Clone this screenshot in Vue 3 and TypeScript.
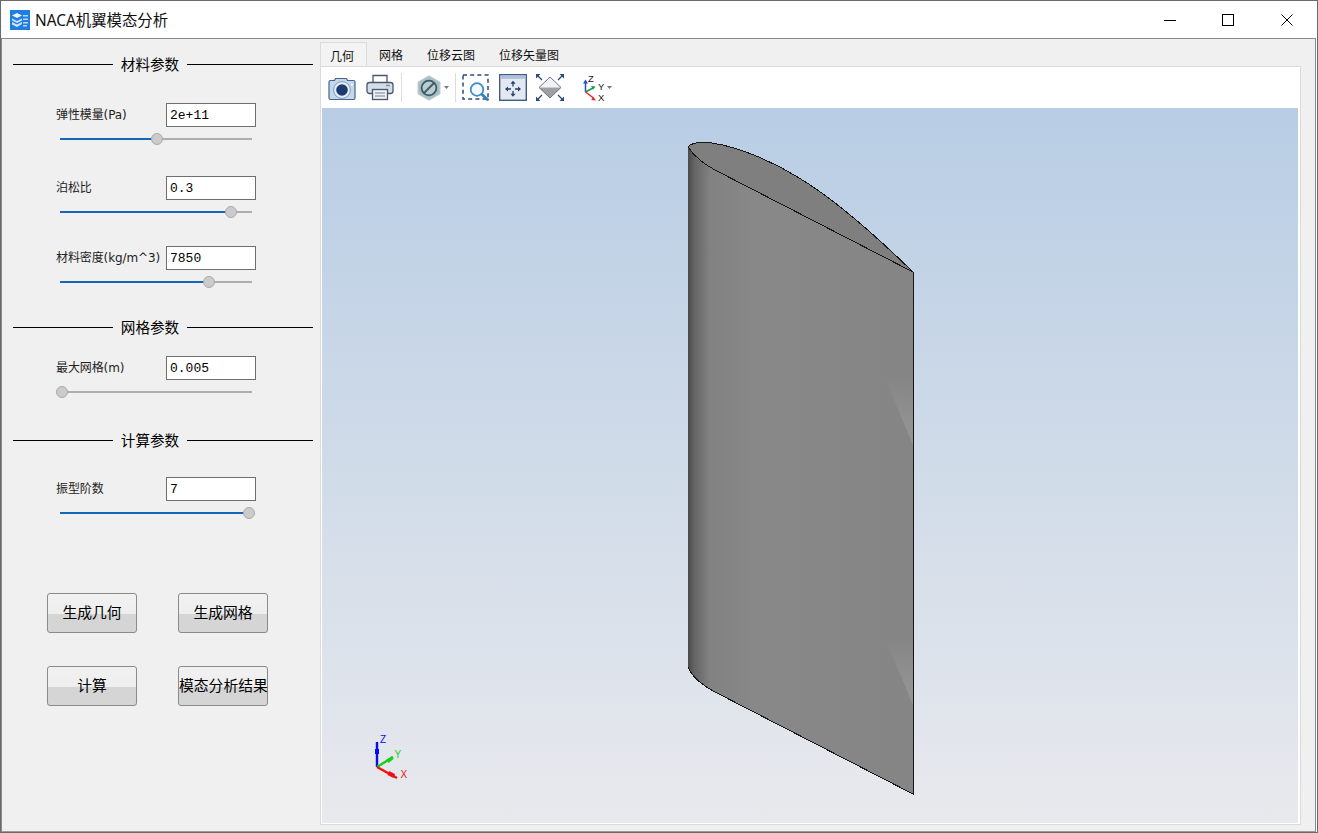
<template>
  <div class="window">
    <header class="titlebar">
      <svg class="app-icon" viewBox="0 0 20 20" aria-hidden="true">
        <rect width="20" height="20" fill="#1f7fe0" />
        <path d="M2 5.500 7 3l5 2.500L7 8z" fill="#eaf4ff" />
        <path d="M2 8.500 7 11l5-2.500v2L7 13l-5-2.500zM2 12l5 2.500 5-2.500v2L7 17l-5-2.500z" fill="#cfe4fb" />
        <path d="M13 5h5v1.600h-5zM13 8.500h5v1.600h-5zM13 12h5v1.600h-5zM13 15h4v1.400h-4z" fill="#b9d8f8" />
      </svg>
      <span class="app-title">NACA机翼模态分析</span>
      <div class="win-controls">
        <button class="win-btn" aria-label="minimize">
          <svg width="12" height="12" viewBox="0 0 12 12"><path d="M0 6.500h12" stroke="#000" /></svg>
        </button>
        <button class="win-btn" aria-label="maximize">
          <svg width="12" height="12" viewBox="0 0 12 12"><rect x=".5" y=".5" width="11" height="11" fill="none" stroke="#000" /></svg>
        </button>
        <button class="win-btn" aria-label="close">
          <svg width="12" height="12" viewBox="0 0 12 12"><path d="M.5.5l11 11M11.500.5l-11 11" stroke="#000" /></svg>
        </button>
      </div>
    </header>

    <div class="main">
      <aside class="panel">
        <section v-for="s in sections" :key="s.title" class="group" :class="s.cls">
          <div class="group-title">
            <i class="rule rule--left"></i>
            <span>{{ s.title }}</span>
            <i class="rule"></i>
          </div>
          <div v-for="f in s.fields" :key="f.label" class="field">
            <div class="field-row">
              <label class="field-label">{{ f.label }}</label>
              <div class="field-input">{{ f.value }}</div>
            </div>
            <div class="slider">
              <div class="slider-fill" :style="{ width: f.pos + 'px' }"></div>
              <div class="slider-knob" :style="{ left: f.pos - 6 + 'px' }"></div>
            </div>
          </div>
        </section>

        <div class="actions">
          <button v-for="a in actions" :key="a" class="action-btn">{{ a }}</button>
        </div>
      </aside>

      <div class="workspace">
        <nav class="tabs">
          <div
            v-for="(t, i) in tabs"
            :key="t"
            class="tab"
            :class="{ 'tab--active': i === 0 }"
          >{{ t }}</div>
        </nav>

        <div class="pane">
          <div class="toolbar">
            <!-- 카메라 -->
            <svg class="tool tool--camera" width="28" height="26" viewBox="0 0 28 26">
              <path d="M2.500 5.500h4l1-2h11l1 2h6a1.500 1.500 0 0 1 1.500 1.500v16a1.500 1.500 0 0 1-1.500 1.500h-23A1.500 1.500 0 0 1 1 23V7a1.500 1.500 0 0 1 1.500-1.500z" fill="#c5d7ea" stroke="#47648c" stroke-width="1.200" />
              <circle cx="14" cy="15" r="8.400" fill="#e6eef7" stroke="#7f9bbd" />
              <circle cx="14" cy="15" r="5.800" fill="#1d3b70" />
              <circle cx="24" cy="9.500" r="1" fill="#fff" />
            </svg>
            <!-- 프린터 -->
            <svg class="tool tool--printer" width="28" height="27" viewBox="0 0 28 27">
              <path d="M7 9V1.500h14V9" fill="#fff" stroke="#47586e" stroke-width="1.300" />
              <rect x="1" y="8.500" width="26" height="11" rx="2.500" fill="#d4dde8" stroke="#47586e" stroke-width="1.300" />
              <path d="M20 11.500h4" stroke="#7f8ea3" stroke-width="1.400" />
              <rect x="6.500" y="15.500" width="15" height="10" fill="#eef1f5" stroke="#47586e" stroke-width="1.300" />
              <path d="M9 19h10M9 22h10" stroke="#9aa6b6" stroke-width="1.400" />
            </svg>
            <i class="tool-sep tool-sep--a"></i>
            <!-- 표시 끄기 -->
            <svg class="tool tool--hex" width="24" height="26" viewBox="0 0 24 26">
              <path d="M12 .8 23 7v12l-11 6.200L1 19V7z" fill="#a9bfc3" stroke="#c0d0d3" />
              <circle cx="12" cy="13" r="7.400" fill="#b9cccf" stroke="#3d5c66" stroke-width="1.800" />
              <path d="M7 18 17 8" stroke="#3d5c66" stroke-width="1.800" />
            </svg>
            <svg class="tool-caret tool-caret--hex" width="5" height="3" viewBox="0 0 5 3"><path d="M0 0h5L2.500 3z" fill="#777" /></svg>
            <i class="tool-sep tool-sep--b"></i>
            <!-- 영역 확대 -->
            <svg class="tool tool--zoom" width="28" height="27" viewBox="0 0 28 27">
              <rect x="1" y="1" width="25" height="24" fill="none" stroke="#2c4a78" stroke-width="1.500" stroke-dasharray="4 3.200" />
              <circle cx="15" cy="15.500" r="6.300" fill="#f2f8fc" stroke="#3e8ec4" stroke-width="1.800" />
              <path d="M19.500 20l7 6.500" stroke="#2f7fb8" stroke-width="2.600" />
            </svg>
            <!-- 화면 맞춤 -->
            <svg class="tool tool--fit" width="28" height="27" viewBox="0 0 28 27">
              <rect x=".7" y=".7" width="26.600" height="25.600" fill="#e4e9f1" stroke="#3f5c88" stroke-width="1.400" />
              <rect x="1.400" y="1.400" width="25.200" height="3.400" fill="#aebfd6" />
              <path d="M14 9v3.500M14 17v3.500M9 15h3M16 15h3" stroke="#22406e" stroke-width="1.300" />
              <path d="M14 6.800l2.600 3h-5.200zM14 22.800l2.600-3h-5.200zM6 15l3-2.600v5.200zM22 15l-3-2.600v5.200z" fill="#22406e" />
            </svg>
            <!-- 전체 보기 -->
            <svg class="tool tool--diamond" width="28" height="27" viewBox="0 0 28 27">
              <path d="M14 3 25 13.500H3z" fill="#f1f2f4" />
              <path d="M3 13.500h22L14 24z" fill="#9c9fa4" />
              <path d="M14 3 25 13.500 14 24 3 13.500z" fill="none" stroke="#6f7480" />
              <path d="M2 2l4 4M26 2l-4 4M2 25l4-4M26 25l-4-4" stroke="#2c4a78" stroke-width="1.300" />
              <path d="M0 0h4.500L0 4.500zM28 0h-4.500L28 4.500zM0 27h4.500L0 22.500zM28 27h-4.500L28 22.500z" fill="#2c4a78" />
            </svg>
            <!-- 좌표축 -->
            <svg class="tool tool--axes" width="23" height="28" viewBox="0 0 23 28">
              <path d="M2.500 18V8" stroke="#1f4fc0" stroke-width="1.500" />
              <path d="M2.500 5.500l2.500 4H0z" fill="#1f4fc0" />
              <path d="M2.500 18 10 14" stroke="#1c9a4a" stroke-width="1.500" />
              <path d="M12.500 12.500l-4.500-.5 2 3.800z" fill="#1c9a4a" />
              <path d="M2.500 18l8 6" stroke="#e0272b" stroke-width="1.500" />
              <path d="M13 26.500l-4.800-.5 2-3.300z" fill="#e0272b" />
              <text x="5" y="8" class="axis-mini">Z</text>
              <text x="15" y="16" class="axis-mini">Y</text>
              <text x="15" y="27" class="axis-mini">X</text>
            </svg>
            <svg class="tool-caret tool-caret--axes" width="5" height="3" viewBox="0 0 5 3"><path d="M0 0h5L2.500 3z" fill="#777" /></svg>
          </div>

          <div class="view">
            <svg class="scene" viewBox="322 108 976 715" aria-hidden="true">
              <defs>
                <linearGradient id="body-shade" gradientUnits="userSpaceOnUse" x1="688" y1="0" x2="913" y2="0">
                  <stop offset="0" stop-color="#4a4a4a" />
                  <stop offset="0.03" stop-color="#666" />
                  <stop offset="0.1" stop-color="#828282" />
                  <stop offset="0.3" stop-color="#888" />
                  <stop offset="1" stop-color="#858585" />
                </linearGradient>
                <linearGradient id="facet" x1="0" y1="0" x2="0" y2="1">
                  <stop offset="0" stop-color="#939393" stop-opacity="0" />
                  <stop offset="0.6" stop-color="#939393" stop-opacity="0.8" />
                  <stop offset="1" stop-color="#959595" />
                </linearGradient>
              </defs>
              <path d="M688 147C692 142 704 142 712 143C740 147 775 163 797 176.700C835 199 875 235 913 272L715 170C702 163 694 156 688 147Z" fill="#7f7f7f" />
              <path d="M688 147C694 156 702 163 715 170L913 272V794L715 692C702 685 692 677 688 667Z" fill="url(#body-shade)" />
              <path d="M885 378H913V445Z" fill="url(#facet)" />
              <path d="M885 638H913V705Z" fill="url(#facet)" />
              <g fill="none" stroke="#161616" stroke-width="1" shape-rendering="crispEdges">
                <path d="M688 147C692 142 704 142 712 143C740 147 775 163 797 176.700C835 199 875 235 913 272" />
                <path d="M688 147C694 156 702 163 715 170L913 272V794L715 692C702 685 692 677 688 667" />
              </g>

              <!-- 뷰 좌표축 -->
              <path d="M377 767V742" stroke="#0a0af0" stroke-width="2.400" />
              <path d="M375 749h4v5h-4z" fill="#0a0af0" />
              <path d="M377 767 393 757" stroke="#17d017" stroke-width="2.400" />
              <path d="M386 760l6-4 1.500 3-5 4z" fill="#17d017" />
              <path d="M377 767 397 778" stroke="#f01010" stroke-width="2.400" />
              <path d="M389 771l6 3-1.500 4-6-3z" fill="#f01010" />
              <text x="380" y="743" class="axis-label axis-label--z">Z</text>
              <text x="394.500" y="758" class="axis-label axis-label--y">Y</text>
              <text x="400.500" y="778" class="axis-label axis-label--x">X</text>
            </svg>
          </div>
        </div>
      </div>
    </div>
  </div>
</template>

<script setup lang="ts">
interface Field {
  label: string;
  value: string;
  pos: number; // 슬라이더 핸들 위치(px)
}

const sections: { title: string; cls: string; fields: Field[] }[] = [
  {
    title: '材料参数',
    cls: 'group--material',
    fields: [
      { label: '弹性模量(Pa)', value: '2e+11', pos: 97 },
      { label: '泊松比', value: '0.3', pos: 171 },
      { label: '材料密度(kg/m^3)', value: '7850', pos: 149 },
    ],
  },
  {
    title: '网格参数',
    cls: 'group--mesh',
    fields: [{ label: '最大网格(m)', value: '0.005', pos: 2 }],
  },
  {
    title: '计算参数',
    cls: 'group--solve',
    fields: [{ label: '振型阶数', value: '7', pos: 189 }],
  },
];

const actions = ['生成几何', '生成网格', '计算', '模态分析结果'];
const tabs = ['几何', '网格', '位移云图', '位移矢量图'];
</script>

<style>
html,
body {
  margin: 0;
  overflow: hidden;
  background: #fff;
}
</style>

<style scoped>
.window {
  width: 1318px;
  height: 833px;
  box-sizing: border-box;
  display: flex;
  flex-direction: column;
  border: 1px solid #6a6a6a;
  background: #fff;
  font-family: "Noto Sans CJK SC", "Noto Sans", sans-serif;
  color: #000;
}

/* 타이틀바 */
.titlebar {
  height: 37px;
  flex: none;
  display: flex;
  align-items: center;
  padding-left: 9px;
}

.app-icon {
  width: 20px;
  height: 20px;
}

.app-title {
  margin-left: 5px;
  font-family: "Noto Sans", "Noto Sans CJK SC", sans-serif;
  font-size: 15.400px;
  color: #111;
}

.win-controls {
  margin-left: auto;
  margin-right: 1px;
  display: flex;
}

.win-btn {
  width: 58.500px;
  height: 37px;
  padding: 0;
  border: 0;
  background: transparent;
  display: flex;
  align-items: center;
  justify-content: center;
}

.main {
  flex: 1;
  min-height: 0;
  display: flex;
  margin-right: 1px;
  border: 1px solid #8a8a8a;
  border-bottom-color: #9a9a9a;
  background: #f0f0f0;
}

/* 왼쪽 패널 */
.panel {
  width: 318px;
  flex: none;
  box-sizing: border-box;
  padding: 15px 7px 0 11px;
}

.group--mesh {
  margin-top: 34px;
}

.group--solve {
  margin-top: 37px;
}

.group-title {
  height: 20px;
  display: flex;
  align-items: center;
  font-size: 14.600px;
  line-height: 20px;
}

.group-title span {
  width: 74px;
  text-align: center;
}

.rule {
  flex: 1;
  height: 1px;
  background: #000;
}

.rule--left {
  flex: none;
  width: 100px;
}

.field {
  padding-left: 43px;
  margin-top: 36px;
}

.group--material .field:nth-child(2) {
  margin-top: 29px;
}

.group--material .field:nth-child(4) {
  margin-top: 33px;
}

.group--mesh .field {
  margin-top: 19px;
}

.group--solve .field {
  margin-top: 27px;
}

.field-row {
  display: flex;
  align-items: center;
  height: 24px;
}

.field-label {
  width: 110px;
  flex: none;
  margin-top: -3px;
  font-family: "DejaVu Sans", "Noto Sans CJK SC", sans-serif;
  font-size: 12px;
  letter-spacing: -0.1px;
  color: #222;
  white-space: nowrap;
}

.field-input {
  width: 90px;
  height: 24px;
  box-sizing: border-box;
  border: 1px solid #6f6f6f;
  background: #fff;
  padding: 0 3px;
  font-family: "Liberation Mono", "DejaVu Sans Mono", monospace;
  font-size: 13px;
  line-height: 24px;
}

.slider {
  position: relative;
  width: 192px;
  height: 2px;
  margin: 11px 0 0 4px;
  background: #aeaeae;
}

.slider-fill {
  height: 100%;
  background: #1565b8;
}

.slider-knob {
  position: absolute;
  top: -5px;
  width: 12px;
  height: 12px;
  box-sizing: border-box;
  border-radius: 50%;
  background: #cbcbcb;
  border: 1px solid #aaa;
}

.actions {
  display: grid;
  grid-template-columns: 90px 90px;
  column-gap: 41px;
  row-gap: 33px;
  margin: 79px 0 0 34px;
}

.action-btn {
  height: 40px;
  padding: 0 0 3px;
  border: 1px solid #8a8a8a;
  border-radius: 3px;
  background: linear-gradient(#f1f1f1 0, #eeeeee 52%, #d5d5d5 52%, #d5d5d5 100%);
  font-family: inherit;
  font-size: 14.800px;
  color: #000;
  white-space: nowrap;
}

/* 오른쪽 작업 영역 */
.workspace {
  flex: 1;
  min-width: 0;
  padding-top: 3px;
  display: flex;
  flex-direction: column;
}

.tabs {
  height: 24px;
  flex: none;
  display: flex;
  font-size: 12px;
}

.tab {
  padding: 0 12px;
  line-height: 25px;
  color: #111;
}

.tab--active {
  padding: 0 12px 0 9px;
  border: 1px solid #dcdcdc;
  border-bottom: 0;
  background: #f3f3f3;
}

.pane {
  width: 981px;
  height: 759px;
  box-sizing: border-box;
  border: 1px solid #dadada;
  padding: 0 2px 1px 1px;
  background: #fff;
  display: flex;
  flex-direction: column;
}

.toolbar {
  height: 41px;
  flex: none;
  display: flex;
  align-items: center;
  padding-left: 6px;
}

.tool {
  flex: none;
}

.tool--printer {
  margin-left: 10px;
}

.tool-sep {
  width: 1px;
  height: 29px;
  flex: none;
  background: #dcdcdc;
}

.tool-sep--a {
  margin-left: 7px;
}

.tool--hex {
  margin-left: 15px;
}

.tool-caret {
  flex: none;
}

.tool-caret--hex {
  margin-left: 3px;
}

.tool-sep--b {
  margin-left: 6px;
}

.tool--zoom {
  margin-left: 6px;
}

.tool--fit,
.tool--diamond {
  margin-left: 9px;
}

.tool--axes {
  margin-left: 19px;
}

.tool-caret--axes {
  margin-left: 1px;
}

.axis-mini {
  font-family: "Liberation Sans", sans-serif;
  font-size: 9.500px;
  fill: #222;
}

.view {
  flex: 1;
  min-height: 0;
  position: relative;
  background: linear-gradient(#b8cde4, #e8e9ed);
}

.scene {
  position: absolute;
  inset: 0;
  width: 100%;
  height: 100%;
}

.axis-label {
  font-family: "Liberation Sans", sans-serif;
  font-size: 10px;
}

.axis-label--z {
  fill: #0a0af0;
}

.axis-label--y {
  fill: #17d017;
}

.axis-label--x {
  fill: #f01010;
}
</style>
